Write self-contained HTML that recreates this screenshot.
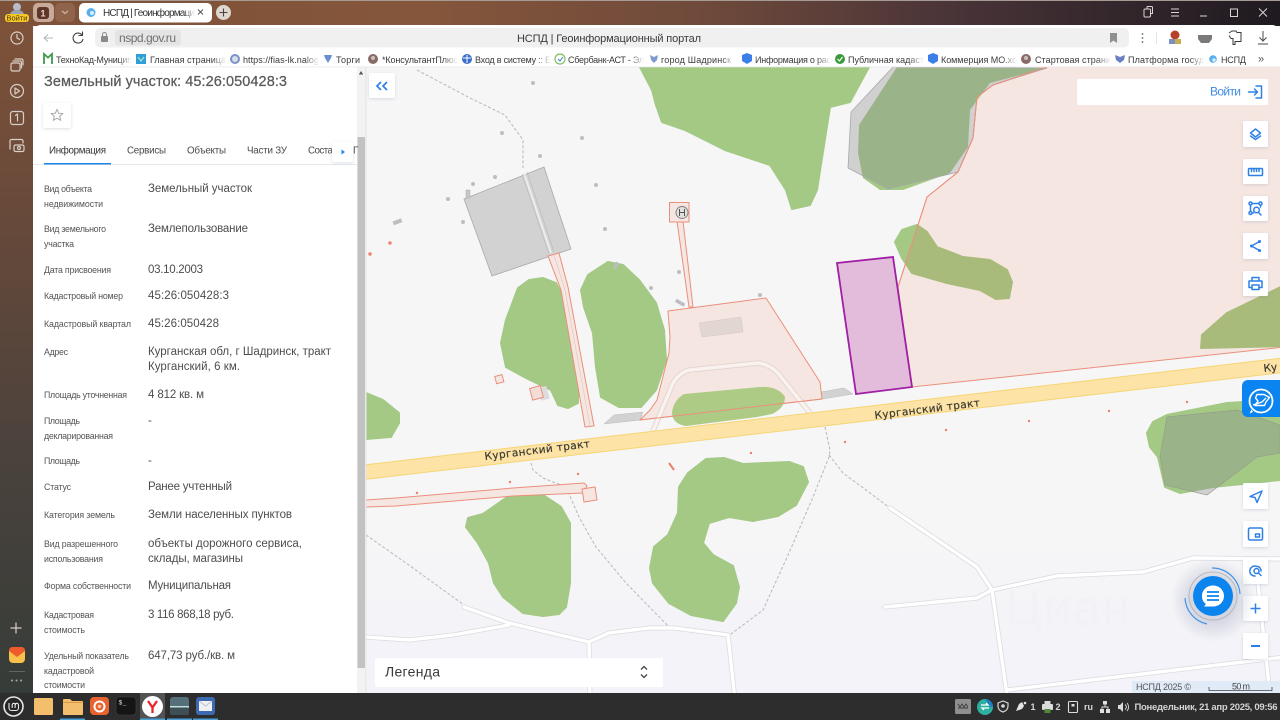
<!DOCTYPE html>
<html lang="ru"><head><meta charset="utf-8"><title>НСПД | Геоинформационный портал</title>
<style>
html,body{margin:0;padding:0;width:1280px;height:720px;overflow:hidden;background:#f6f6f7}
svg{display:block;position:absolute;left:0;top:0}
text{font-family:"Liberation Sans","Noto Sans CJK JP",sans-serif}
.l{font-size:8.8px;fill:#555}
.v{font-size:11.5px;fill:#4d4d4d}
.b{font-size:9px;fill:#3a3a3a}
.t{font-size:9.8px;fill:#4a4a4a}
.r{font-family:"DejaVu Sans",sans-serif;font-size:10.5px;fill:#3a3a30;stroke:#3a3a30;stroke-width:.2}
.ic{fill:none;stroke:#2f80e6;stroke-width:1.5;stroke-linecap:round;stroke-linejoin:round}
.si{fill:none;stroke:#d9cfc8;stroke-width:1.2;stroke-linecap:round;stroke-linejoin:round}
.rd1{fill:none;stroke:#dcdce0;stroke-width:5;stroke-linecap:round;stroke-linejoin:round}
.rd2{fill:none;stroke:#fff;stroke-width:3.4;stroke-linecap:round;stroke-linejoin:round}
.ds{fill:none;stroke:#bcbcc0;stroke-width:1.1;stroke-dasharray:3 2}
.pk{fill:#f6e6e1;stroke:#ea8f7c;stroke-width:1}
</style></head><body>
<svg width="1280" height="720" viewBox="0 0 1280 720" xmlns="http://www.w3.org/2000/svg">
<defs>
<linearGradient id="top" x1="0" x2="1" y1="0" y2="0"><stop offset="0" stop-color="#7c5138"/><stop offset=".33" stop-color="#85563b"/><stop offset=".55" stop-color="#6f4a3b"/><stop offset=".75" stop-color="#483337"/><stop offset="1" stop-color="#1e1a20"/></linearGradient>
<linearGradient id="side" x1="0" x2="0" y1="0" y2="1"><stop offset="0" stop-color="#7e5239"/><stop offset=".3" stop-color="#66493a"/><stop offset=".65" stop-color="#4a423c"/><stop offset="1" stop-color="#363c39"/></linearGradient>
<linearGradient id="low" x1="0" x2="0" y1="0" y2="1"><stop offset="0" stop-color="#f6f6f7"/><stop offset="1" stop-color="#f3f3f9"/></linearGradient>
<linearGradient id="fade" x1="0" x2="1" y1="0" y2="0"><stop offset="0" stop-color="#fff" stop-opacity="0"/><stop offset="1" stop-color="#fff"/></linearGradient>
<radialGradient id="sh"><stop offset=".5" stop-color="#8088a8" stop-opacity=".28"/><stop offset="1" stop-color="#8088a8" stop-opacity="0"/></radialGradient>
<filter id="bs" x="-30%" y="-30%" width="160%" height="160%"><feDropShadow dx="0" dy="1" stdDeviation="1.5" flood-color="#6a7a90" flood-opacity=".25"/></filter>
<clipPath id="pc"><polygon points="1047,67 993,85 977,97 973,138 958,172 927,197 898,287 912,387 1280,348 1280,67"/></clipPath>
</defs>

<!-- MAP -->
<rect x="366" y="67" width="914" height="626" fill="#f6f6f7"/>
<rect x="366" y="520" width="914" height="173" fill="url(#low)"/>
<rect x="366" y="640" width="914" height="53" fill="#f3f3f9"/>
<text x="1005" y="625" font-size="50" fill="#f1f1f6" textLength="125">Циан</text>

<!-- dashed paths -->
<path class="ds" d="M417,70 470,98 505,115 523,140 523,168"/>
<path class="ds" d="M531,463 533,470 543,478 566,487 579,517 596,547 626,583 669,627"/>
<path class="ds" d="M825,427 830,450 829,457 813,497 789,553 763,610 731,634"/>
<path class="ds" d="M366,535 406,563 464,605"/>
<path class="ds" d="M829,455 843,473 866,490 890,508"/>

<!-- lower roads -->
<g>
<path class="rd1" d="M464,607 509,623 589,642 590,700"/><path class="rd1" d="M366,637 409,640 453,635 509,625"/><path class="rd1" d="M589,642 609,633 649,628 674,628 728,635 735,700"/>
<path class="rd1" d="M890,508 977,567 992,590 1007,695"/><path class="rd1" d="M885,607 977,598 992,590 1057,576 1143,572 1193,558 1285,559"/><path class="rd1" d="M1258,583 1270,695"/><path class="rd1" d="M1007,690 1285,657"/>
<path class="rd2" d="M464,607 509,623 589,642 590,700"/><path class="rd2" d="M366,637 409,640 453,635 509,625"/><path class="rd2" d="M589,642 609,633 649,628 674,628 728,635 735,700"/>
<path class="rd2" d="M890,508 977,567 992,590 1007,695"/><path class="rd2" d="M885,607 977,598 992,590 1057,576 1143,572 1193,558 1285,559"/><path class="rd2" d="M1258,583 1270,695"/><path class="rd2" d="M1007,690 1285,657"/>
</g>

<!-- greens -->
<g fill="#a3c985" stroke="#a3c985" stroke-width="2" stroke-linejoin="round">
<polygon points="640,67 652,90 656,105 662,122 685,130 725,150 770,165 786,190 792,209 810,205 817,190 830,107 850,102 869,67"/>
<polygon points="518,288 529,280 543,278 556,283 561,293 566,320 571,350 578,377 578,403 568,408 558,405 551,390 526,378 506,367 501,343 506,320"/>
<polygon points="581,290 588,275 608,262 623,265 639,280 656,303 664,330 666,360 656,390 641,407 619,407 601,397 596,367 593,333 584,307"/>
<polygon points="366,393 383,400 399,413 399,423 391,437 366,439"/>
<polygon points="468,518 483,514 513,493 523,489 543,495 561,507 570,523 570,583 566,607 559,614 543,616 523,613 503,597 494,583 489,563 478,543 466,527"/>
<polygon points="706,459 724,458 743,464 789,462 803,467 808,482 796,505 778,516 753,521 729,517 709,523 703,543 713,555 733,566 739,587 736,603 723,621 691,615 669,603 653,583 650,568 654,547 668,535 678,513 679,487 688,473"/>
<polygon points="895,242 902,230 917,225 927,232 937,247 963,257 990,260 1007,270 1012,282 1009,298 996,299 980,290 947,283 912,273 902,258"/>
<polygon points="1147,433 1153,422 1167,415 1227,403 1280,400 1280,480 1213,487 1180,493 1165,487 1158,457 1150,447"/>
</g>

<!-- big pink zone -->
<polygon class="pk" points="1047,67 993,85 977,97 973,138 958,172 927,197 898,287 912,387 1285,347 1285,60 1047,60"/>
<g clip-path="url(#pc)" fill="#a9bb7b" stroke="#a9bb7b" stroke-width="2" stroke-linejoin="round">
<polygon points="895,242 902,230 917,225 927,232 937,247 963,257 990,260 1007,270 1012,282 1009,298 996,299 980,290 947,283 912,273 902,258"/>
<polygon points="1201,348 1202,335 1227,313 1285,285 1285,346"/>
</g>

<!-- top forest + gray -->
<polygon fill="#a3c985" points="897,67 859,125 858,153 863,178 880,190 903,190 950,173 968,147 970,110 990,83 1047,68"/>
<polygon fill="#8e8e8e" fill-opacity=".36" stroke="#a8a8a8" stroke-width=".8" points="893,67 851,112 848,168 888,189 958,172 973,138 977,97 993,85 1047,68"/>
<polyline fill="none" stroke="#ea8f7c" points="1047,67 993,85 977,97 973,138 958,172 927,197 898,287"/>

<!-- right lower gray -->
<polygon fill="#8e8e8e" fill-opacity=".36" stroke="#969c8e" stroke-width=".7" points="1167,417 1237,410 1280,425 1280,453 1257,457 1207,495 1165,485 1160,457"/>

<!-- building -->
<polygon points="464,199 544,167 571,249 492,276" fill="#d2d2d3" stroke="#a9a9ab" stroke-width=".8"/>
<path d="M524,173 551,253" stroke="#ececec" stroke-width="2" fill="none"/>
<path d="M522,174 549,254M527,172 554,252" stroke="#b8b8b8" stroke-width=".6" fill="none"/>
<rect x="466" y="190" width="4" height="8" fill="#c8c8c8" stroke="#aaa" stroke-width=".5"/>

<!-- pink road to building -->
<polygon class="pk" points="548,256 559,253 568,287 594,426 585,427 561,290"/>
<path d="M554,255 565,290 590,426" stroke="#e2c9c2" stroke-width=".7" fill="none"/>

<!-- gray strips -->
<polygon points="821,392 844,388 853,394 822,399" fill="#d2d2d3" stroke="#b8b8b8" stroke-width=".5"/>
<polygon points="604,424 614,415 643,412 640,420" fill="#d2d2d3" stroke="#b8b8b8" stroke-width=".5"/>

<!-- central pink -->
<polygon class="pk" points="668,311 766,298 820,382 822,399 640,420 650,410 657,400 669,353 670,337"/>
<polygon points="699,323 741,317 743,332 702,337" fill="#e2d6d2" stroke="#d4c8c4" stroke-width=".5"/>
<path d="M653,431 673,383 Q680,372 690,370 L758,363 Q768,364 777,372 L810,413" fill="none" stroke="#e4d6d1" stroke-width="5.500"/>
<path d="M653,431 673,383 Q680,372 690,370 L758,363 Q768,364 777,372 L810,413" fill="none" stroke="#faf2ee" stroke-width="3.500"/>
<path fill="#aecb85" d="M672,412 Q674,400 684,394 L760,387 Q778,386 785,397 Q785,408 772,414 L757,417 L686,426 Q672,424 672,412Z"/>
<polyline fill="none" stroke="#ea8f7c" points="640,420 822,399"/>

<!-- purple selected -->
<polygon points="837,263 893,257 912,387 856,394" fill="#e4bcdb" stroke="#a01fa4" stroke-width="1.800"/>

<!-- hotel -->
<polygon class="pk" points="677,221 683,221 693,307 689,307"/>
<rect x="669.500" y="202.500" width="19.500" height="19.500" class="pk"/>
<circle cx="682" cy="212.500" r="6" fill="#e2e0de" stroke="#7a7a7a" stroke-width=".9"/>
<path d="M679.500,209v7M684.500,209v7M679.500,212.500h5" stroke="#555" stroke-width="1" fill="none"/>

<!-- small pink bits -->
<rect x="495.500" y="375.500" width="7.500" height="7.500" transform="rotate(-15 499 379)" fill="#f6e6e1" stroke="#ea8f7c"/>
<rect x="539" y="387" width="9" height="13" transform="rotate(-15 543 393)" fill="#dcdcdc"/>
<rect x="531" y="387" width="11" height="12" transform="rotate(-15 536 393)" fill="#f3ddd6" stroke="#ea8f7c"/>
<path d="M366,500 396,498 513,488 584,483 587,486 583,493 513,496 396,506 366,507Z" class="pk"/>
<polygon class="pk" points="582,489 595,487 597,500 584,502"/>
<path d="M669,463 674,470" stroke="#e9806a" stroke-width="2"/>

<!-- yellow road -->
<path d="M360,472.700 1285,365" stroke="#f5d576" stroke-width="15.500" fill="none"/>
<path d="M360,472.700 1285,365" stroke="#fde3a6" stroke-width="13.500" fill="none"/>
<text class="r" transform="translate(485,460) rotate(-7)" textLength="106">Курганский тракт</text>
<text class="r" transform="translate(875,419) rotate(-7)" textLength="106">Курганский тракт</text>
<text class="r" transform="translate(1264,372) rotate(-7)">Ку</text>

<!-- dots -->
<g fill="#bdbdc2">
<circle cx="448" cy="199" r="2"/><circle cx="473" cy="184" r="2"/><circle cx="495" cy="177" r="2"/><circle cx="463" cy="222" r="2"/><circle cx="596" cy="185" r="2"/><circle cx="605" cy="229" r="2"/><circle cx="651" cy="288" r="2"/><circle cx="679" cy="272" r="2"/><circle cx="760" cy="295" r="2"/><circle cx="533" cy="83" r="2"/><circle cx="502" cy="133" r="2"/><circle cx="540" cy="156" r="2"/><circle cx="582" cy="138" r="2"/>
<rect x="393" y="220" width="9" height="4" transform="rotate(-20 397 222)"/>
<rect x="613" y="264" width="7" height="3.500" transform="rotate(-60 616 266)"/>
<rect x="675" y="301" width="10" height="3.500" transform="rotate(30 680 303)"/>
</g>
<g fill="#ec8068">
<circle cx="370" cy="254" r="1.700"/><circle cx="390" cy="243" r="1.700"/><circle cx="417" cy="493" r="1.200"/><circle cx="510" cy="482" r="1.200"/><circle cx="578" cy="474" r="1.200"/><circle cx="751" cy="453" r="1.200"/><circle cx="845" cy="442" r="1.200"/><circle cx="946" cy="430" r="1.200"/><circle cx="1029" cy="421" r="1.200"/><circle cx="1109" cy="411" r="1.200"/><circle cx="1187" cy="402" r="1.200"/>
</g>

<!-- attribution -->
<rect x="1132" y="681" width="148" height="12" fill="#dfeaf7" fill-opacity=".9"/>
<text x="1136" y="690" font-size="9" fill="#555" textLength="55">НСПД 2025 ©</text>
<text x="1232" y="689.500" font-size="9" fill="#444" textLength="18">50 m</text>
<path d="M1209,687v3.500h63v-3.500" stroke="#444" stroke-width=".8" fill="none"/>

<!-- Legend -->
<rect x="375" y="658" width="288" height="29" rx="2" fill="#fff"/>
<text x="385" y="676.500" font-size="14" fill="#3a3a3a" textLength="55">Легенда</text>
<path d="M641,669.500 644,666.500 647,669.500M641,674.500 644,677.500 647,674.500" stroke="#444" stroke-width="1.300" fill="none"/>

<!-- collapse -->
<rect x="369" y="73" width="26" height="25" rx="2" fill="#fff" filter="url(#bs)"/>
<path d="M381,82 377,86 381,90M387,82 383,86 387,90" fill="none" stroke="#2f80e6" stroke-width="1.700"/>

<!-- login -->
<rect x="1077" y="79" width="191" height="26" rx="1.500" fill="#fff"/>
<text x="1210" y="95.500" font-size="12" fill="#3f8ae2" textLength="31">Войти</text>
<path class="ic" stroke-width="1.700" d="M1248.500,92h9M1254.500,89l3,3-3,3M1256,86h5.500v12h-5.500"/>

<!-- right buttons -->
<g filter="url(#bs)" fill="#fff">
<rect x="1243" y="121" width="25" height="26" rx="1.500"/><rect x="1243" y="159" width="25" height="25" rx="1.500"/><rect x="1243" y="196" width="25" height="25" rx="1.500"/><rect x="1243" y="233" width="25" height="26" rx="1.500"/><rect x="1243" y="271" width="25" height="25" rx="1.500"/>
<rect x="1243" y="483" width="25" height="26" rx="1.500"/><rect x="1243" y="521" width="25" height="26" rx="1.500"/><rect x="1243" y="558" width="25" height="26" rx="1.500"/><rect x="1243" y="596" width="25" height="25" rx="1.500"/><rect x="1243" y="633" width="25" height="26" rx="1.500"/>
</g>
<path class="ic" stroke-width="1.200" d="M1255.500,129 1260.500,133 1255.500,137 1250.500,133ZM1250.500,136 1255.500,139.500 1260.500,136"/>
<rect class="ic" x="1248.500" y="168.500" width="14" height="7" rx="1"/><path class="ic" stroke-width="1" d="M1251.500,169v2.500M1254,169v2.500M1256.500,169v2.500M1259,169v2.500"/>
<g class="ic" stroke-width="1"><circle cx="1250.500" cy="203.500" r="1.500"/><circle cx="1260.500" cy="203.500" r="1.500"/><circle cx="1250.500" cy="213" r="1.500"/><circle cx="1256.500" cy="210" r="2.800"/><path d="M1252.500,203.500h6M1250.500,205.500v6M1252.500,213h1M1260.500,205.500v1.500M1258.500,212.500l2.500,2.500"/></g>
<g class="ic" stroke-width="1.200"><path d="M1259.500,241.500 1251.500,246 1259.500,250.500"/><circle cx="1251.500" cy="246" r=".8" fill="#2f80e6"/><circle cx="1259.500" cy="241.500" r=".8" fill="#2f80e6"/><circle cx="1259.500" cy="250.500" r=".8" fill="#2f80e6"/></g>
<g class="ic" stroke-width="1.700"><path d="M1252,281v-3.500h7v3.500M1252,287.500h-3v-6.500h13v6.500h-3"/><rect x="1252" y="285" width="7" height="4.500"/></g>
<path class="ic" d="M1262,491 1250,496.500 1255,497.500 1257,502.500Z"/>
<rect class="ic" x="1248.500" y="528" width="14" height="12" rx="1.500"/><rect class="ic" x="1255.500" y="534" width="4" height="3" stroke-width="1.100"/>
<g class="ic" stroke-width="1.100"><circle cx="1256.500" cy="571" r="2.500"/><path d="M1257,566.500a5,5 0 1 0 -2,9.500M1261,571a4.500,4.500 0 0 0 -3,-4.500M1258.500,573l2.500,2.500"/></g>
<path d="M1250.500,608.500h10M1255.500,603.500v10" stroke="#2f80e6" stroke-width="1.500" fill="none"/>
<path d="M1251,646h9" stroke="#2f80e6" stroke-width="2" fill="none"/>

<!-- side tab -->
<path d="M1248,380H1280V417H1248a6,6 0 0 1 -6,-6V386a6,6 0 0 1 6,-6Z" fill="#0a84f0"/>
<circle cx="1261" cy="401" r="11.500" fill="none" stroke="#fff" stroke-width="1.800"/>
<path d="M1257,394.500h7l5.500,3-3.500,4.500-1.500,3.500h-9.500l3,-4.500-2.500,-3z" fill="#0a84f0" stroke="#fff" stroke-width="1.400" stroke-linejoin="round"/>
<path d="M1253,405 1262,402 1266,398" fill="none" stroke="#fff" stroke-width="1.300"/>
<path d="M1253,412l-3.500,1.500 2,-4z" fill="#fff"/>

<!-- chat -->
<circle cx="1213" cy="600" r="42" fill="url(#sh)"/>
<circle cx="1213" cy="596" r="24" fill="none" stroke="#b9b9bd" stroke-width="1.100"/>
<path d="M1212,568a28,28 0 0 1 28,26" fill="none" stroke="#3e93e6" stroke-width="1.200"/>
<path d="M1185,598a28,28 0 0 0 22,26" fill="none" stroke="#3e93e6" stroke-width="1.200"/>
<circle cx="1213" cy="596" r="20" fill="#0b84ee"/>
<path d="M1213,585.500c6.200,0 11,4.600 11,10.500s-4.800,10.500-11,10.500h-9l2,-2.500c-2.900,-1.900-4,-4.700-4,-8c0,-5.900 4.800,-10.500 11,-10.500Z" fill="#fff"/>
<path d="M1207,592h12M1207,596h12M1207,600h12" stroke="#0b84ee" stroke-width="1.800" fill="none"/>

<!-- LEFT PANEL -->
<rect x="33" y="67" width="324" height="626" fill="#fff"/>
<rect x="357" y="67" width="8.500" height="626" fill="#f2f2f2"/>
<rect x="357.500" y="137" width="7.500" height="531" fill="#c2c2c2"/>
<path d="M361,71 358.800,74.500H363.200Z" fill="#555"/>
<rect x="365.500" y="67" width="1" height="626" fill="#e3e3e6"/>
<text x="44" y="86" font-size="14.500" fill="#5a5a5a" stroke="#5a5a5a" stroke-width=".25" textLength="243">Земельный участок: 45:26:050428:3</text>
<rect x="43" y="103" width="28" height="25" rx="2" fill="#fff" filter="url(#bs)"/>
<path d="M57,109.500 58.700,113.200 62.700,113.600 59.700,116.300 60.600,120.300 57,118.200 53.400,120.300 54.300,116.300 51.300,113.600 55.300,113.200Z" fill="none" stroke="#a8a8a8" stroke-width="1"/>

<text x="49" y="153.500" class="t" style="fill:#333" textLength="57">Информация</text>
<text x="127" y="153.500" class="t" textLength="39">Сервисы</text>
<text x="187" y="153.500" class="t" textLength="39">Объекты</text>
<text x="247" y="153.500" class="t" textLength="40">Части ЗУ</text>
<text x="308" y="153.500" class="t" textLength="25">Соста</text>
<text x="353" y="153.500" class="t">Г</text>
<rect x="33" y="164" width="324" height="1" fill="#e6e8ec"/>
<rect x="44" y="163" width="67" height="1.500" fill="#1f86e6"/>
<rect x="332" y="142" width="21" height="20" rx="2" fill="#fff" filter="url(#bs)"/>
<path d="M341.500,149.500 345,152 341.500,154.500Z" fill="#1f86e6"/>

<g>
<text class="l" x="44" y="192" textLength="48">Вид объекта</text>
<text class="l" x="44" y="207" textLength="59">недвижимости</text>
<text class="l" x="44" y="232" textLength="62">Вид земельного</text>
<text class="l" x="44" y="247" textLength="30">участка</text>
<text class="l" x="44" y="273" textLength="67">Дата присвоения</text>
<text class="l" x="44" y="299" textLength="79">Кадастровый номер</text>
<text class="l" x="44" y="327" textLength="87">Кадастровый квартал</text>
<text class="l" x="44" y="355" textLength="24">Адрес</text>
<text class="l" x="44" y="398" textLength="83">Площадь уточненная</text>
<text class="l" x="44" y="424" textLength="36">Площадь</text>
<text class="l" x="44" y="439" textLength="69">декларированная</text>
<text class="l" x="44" y="464" textLength="36">Площадь</text>
<text class="l" x="44" y="490" textLength="27">Статус</text>
<text class="l" x="44" y="518" textLength="71">Категория земель</text>
<text class="l" x="44" y="547" textLength="74">Вид разрешенного</text>
<text class="l" x="44" y="562" textLength="59">использования</text>
<text class="l" x="44" y="589" textLength="87">Форма собственности</text>
<text class="l" x="44" y="618" textLength="50">Кадастровая</text>
<text class="l" x="44" y="633" textLength="41">стоимость</text>
<text class="l" x="44" y="659" textLength="85">Удельный показатель</text>
<text class="l" x="44" y="674" textLength="50">кадастровой</text>
<text class="l" x="44" y="688" textLength="41">стоимости</text>
</g>
<g>
<text class="v" x="148" y="192" textLength="104">Земельный участок</text>
<text class="v" x="148" y="232" textLength="100">Землепользование</text>
<text class="v" x="148" y="273" textLength="55">03.10.2003</text>
<text class="v" x="148" y="299" textLength="81">45:26:050428:3</text>
<text class="v" x="148" y="327" textLength="71">45:26:050428</text>
<text class="v" x="148" y="355" textLength="183">Курганская обл, г Шадринск, тракт</text>
<text class="v" x="148" y="370" textLength="92">Курганский, 6 км.</text>
<text class="v" x="148" y="398" textLength="56">4 812 кв. м</text>
<text class="v" x="148" y="424">-</text>
<text class="v" x="148" y="464">-</text>
<text class="v" x="148" y="490" textLength="84">Ранее учтенный</text>
<text class="v" x="148" y="518" textLength="144">Земли населенных пунктов</text>
<text class="v" x="148" y="547" textLength="154">объекты дорожного сервиса,</text>
<text class="v" x="148" y="562" textLength="95">склады, магазины</text>
<text class="v" x="148" y="589" textLength="83">Муниципальная</text>
<text class="v" x="148" y="618" textLength="86">3 116 868,18 руб.</text>
<text class="v" x="148" y="659" textLength="87">647,73 руб./кв. м</text>
</g>

<!-- WINDOW CHROME -->
<rect width="1280" height="26" fill="url(#top)"/>
<rect width="1280" height="1" fill="#a59a94"/>
<rect x="0" y="25" width="33" height="668" fill="url(#side)"/>
<path d="M33,67V33a8,8 0 0 1 8,-8H1272a8,8 0 0 1 8,8V67Z" fill="#fff"/>

<!-- user -->
<circle cx="17" cy="7" r="4" fill="#b6bcc8"/><path d="M10,14c1,-3 4,-4 7,-4s6,1 7,4z" fill="#9aa2b0"/>
<rect x="5" y="14" width="24" height="8" rx="3" fill="#f6c926"/>
<text x="17" y="20.500" font-size="7.500" fill="#4a3a10" text-anchor="middle">Войти</text>

<rect x="33" y="3" width="21" height="19" rx="5" fill="#c7aa9a"/>
<rect x="37" y="7" width="12" height="12" rx="3" fill="#5f3429"/>
<text x="43" y="16.500" font-size="9" font-weight="700" fill="#e8d8d0" text-anchor="middle">1</text>
<rect x="55" y="3" width="20" height="19" rx="5" fill="#8f644b"/>
<path d="M62,11l3,2.500 3,-2.500" stroke="#cdb6a8" stroke-width="1.200" fill="none"/>
<rect x="79" y="3" width="133" height="19.500" rx="5" fill="#fff"/>
<circle cx="91" cy="12.500" r="4.500" fill="#58b0ee"/><circle cx="92" cy="13" r="2" fill="#d8eefa"/>
<text x="103" y="16" font-size="10" fill="#333" textLength="92">НСПД | Геоинформаци</text>
<rect x="183" y="4" width="12" height="17" fill="url(#fade)"/>
<path d="M198,9.500l5,5M203,9.500l-5,5" stroke="#555" stroke-width="1" fill="none"/>
<circle cx="223.500" cy="12.500" r="7.500" fill="#e0d6d0"/><path d="M219.500,12.500h8M223.500,8.500v8" stroke="#444" stroke-width="1.100"/>

<!-- window controls -->
<g fill="none" stroke="#d8d4d2" stroke-width="1">
<rect x="1144" y="9" width="6.500" height="8" rx="1"/><path d="M1147,6.500h4.500a1,1 0 0 1 1,1v6h-2M1147,6.500v2.500"/>
<path d="M1171,9h8M1171,12.500h8M1171,16h8"/>
<path d="M1200,16h7"/>
<rect x="1230.500" y="9" width="7" height="7.500"/>
<path d="M1259,8.500l8,8M1267,8.500l-8,8"/>
</g>

<!-- toolbar -->
<rect x="95" y="28" width="1034" height="19.500" rx="5" fill="#f0f0f0"/>
<rect x="115" y="30" width="66" height="15.500" rx="3" fill="#e4e4e4"/>
<text x="119" y="42" font-size="12" fill="#707070" textLength="57">nspd.gov.ru</text>
<rect x="101" y="36" width="7" height="6" rx="1" fill="#8a8a8a"/><path d="M102.500,36v-1.500a2,2 0 0 1 4,0V36" fill="none" stroke="#8a8a8a"/>
<text x="517" y="42" font-size="11" fill="#3a3a3a" textLength="184">НСПД | Геоинформационный портал</text>
<path d="M1110,33h7v10l-3.500,-2.500 -3.500,2.500Z" fill="#8f8f8f"/>
<path d="M44,38h9M44,38l4,-3.500M44,38l4,3.500" stroke="#b5b5b5" stroke-width="1.100" fill="none"/>
<path d="M82,35a5,5 0 1 0 1,4M82.500,31.500V35.500H78.500" stroke="#444" stroke-width="1.100" fill="none"/>
<g fill="#666"><circle cx="1142.500" cy="34" r=".9"/><circle cx="1142.500" cy="38" r=".9"/><circle cx="1142.500" cy="42" r=".9"/></g>
<rect x="1156" y="32" width="1" height="12" fill="#e4e4e4"/>
<circle cx="1175" cy="35" r="4.500" fill="#b8402a"/><rect x="1169" y="39" width="6" height="5" fill="#7c8fc0"/><rect x="1175" y="39" width="6" height="5" fill="#c4b050"/>
<path d="M1198,35h14v4l-3,4h-8l-3,-4Z" fill="#7a7a7a"/>
<path d="M1229,33l3,-2h4l1,1.500h4v9h-6v3h-2v-6h-2l-2,-3" fill="none" stroke="#3a3a3a" stroke-width="1"/>
<path d="M1263,31v10M1259.500,37.500l3.500,3.500 3.500,-3.500M1258,44h10" fill="none" stroke="#4a4a4a" stroke-width="1"/>

<!-- bookmarks -->
<rect x="33" y="66.500" width="1247" height=".8" fill="#e8e8e8"/>
<g>
<text class="b" x="56" y="63" textLength="76">ТехноКад-Муницип</text>
<text class="b" x="150" y="63" textLength="76">Главная страница</text>
<text class="b" x="243" y="63" textLength="76">https://fias-lk.nalog</text>
<text class="b" x="336" y="63" textLength="24">Торги</text>
<text class="b" x="382" y="63" textLength="76">*КонсультантПлюс</text>
<text class="b" x="475" y="63" textLength="76">Вход в систему :: Е</text>
<text class="b" x="568" y="63" textLength="76">Сбербанк-АСТ - Эл</text>
<text class="b" x="661" y="63" textLength="70">город Шадринск</text>
<text class="b" x="755" y="63" textLength="76">Информация о рас</text>
<text class="b" x="848" y="63" textLength="76">Публичная кадаст</text>
<text class="b" x="941" y="63" textLength="76">Коммерция МО.хо</text>
<text class="b" x="1035" y="63" textLength="76">Стартовая страни</text>
<text class="b" x="1128" y="63" textLength="76">Платформа госуд</text>
<text class="b" x="1221" y="63" textLength="25">НСПД</text>
</g>
<g fill="url(#fade)">
<rect x="118" y="51" width="14" height="15"/><rect x="212" y="51" width="14" height="15"/><rect x="305" y="51" width="14" height="15"/><rect x="442" y="51" width="16" height="15"/><rect x="536" y="51" width="15" height="15"/><rect x="630" y="51" width="14" height="15"/><rect x="722" y="51" width="12" height="15"/><rect x="816" y="51" width="15" height="15"/><rect x="908" y="51" width="16" height="15"/><rect x="1002" y="51" width="15" height="15"/><rect x="1096" y="51" width="15" height="15"/><rect x="1190" y="51" width="14" height="15"/>
</g>
<!-- bookmark icons -->
<path d="M44,64V54l4,3.500 4,-3.500v10" fill="none" stroke="#3e9a4c" stroke-width="1.800"/>
<rect x="136" y="54" width="10" height="10" fill="#2f9fd8"/><path d="M138,57l3,4 3,-4" stroke="#a8e0c8" stroke-width="1.300" fill="none"/>
<circle cx="235" cy="59" r="5" fill="#7b93c8"/><circle cx="235" cy="59" r="3" fill="#d8dde8"/>
<path d="M324,55h8l-1,3 -3,5 -3,-5Z" fill="#6a8fd0"/>
<circle cx="373" cy="59" r="5" fill="#8a6a68"/><circle cx="373" cy="58" r="2" fill="#c8c0bc"/>
<circle cx="467" cy="59" r="5" fill="#3a6fc8"/><path d="M463,58h8M467,55v8" stroke="#fff"/>
<circle cx="560" cy="59" r="5" fill="#fff" stroke="#7fbf60" stroke-width="1.200"/><path d="M558,59l2,2 3,-4" stroke="#3a80c0" fill="none"/>
<path d="M650,55l4,2 4,-2 -1,5 -3,3 -3,-3Z" fill="#7f9ad0"/>
<path d="M742,55l5,-2 5,2v6l-5,3 -5,-3Z" fill="#3d7fe8"/>
<circle cx="840" cy="59" r="5" fill="#3a9a3c"/><path d="M837.500,59l2,2 3,-4" stroke="#fff" stroke-width="1.200" fill="none"/>
<path d="M928,55l5,-2 5,2v6l-5,3 -5,-3Z" fill="#3d7fe8"/>
<circle cx="1026" cy="59" r="5" fill="#8a6a68"/><circle cx="1026" cy="58" r="2" fill="#c8c0bc"/>
<path d="M1115,55l5,2 5,-2 -1,5 -4,3 -4,-3Z" fill="#6a80c0"/>
<circle cx="1213" cy="59" r="3.800" fill="#55aeee"/><circle cx="1214" cy="60" r="1.700" fill="#d8eefa"/>
<text x="1258" y="62.500" font-size="11" fill="#555">»</text>

<!-- sidebar icons -->
<g class="si">
<circle cx="17" cy="38" r="6"/><path d="M17,34.500V38l2.500,1.500"/>
<rect x="11" y="63" width="9" height="8" rx="1.500"/><path d="M13,61h7a1.500,1.500 0 0 1 1.500,1.500V68M15,59h6.500a1.500,1.500 0 0 1 1.500,1.500V65"/>
<circle cx="17" cy="91" r="6.500"/><path d="M15,88l4.500,3 -4.500,3Z"/>
<rect x="10.500" y="111.500" width="13" height="13" rx="2.500"/><path d="M15.500,115.500l2,-1.500v7"/>
<path d="M10,149v-8a1.500,1.500 0 0 1 1.500,-1.500h10a1.500,1.500 0 0 1 1.500,1.500v2"/><rect x="14" y="145" width="10" height="6.500" rx="1.500"/><circle cx="19" cy="148" r="1.500"/>
<path d="M11,628h10M16,623v10"/>
</g>
<rect x="9" y="647" width="16" height="16" rx="4" fill="#f7c14a"/><path d="M9,651a4,4 0 0 1 4,-4h8a4,4 0 0 1 4,4l-8,6Z" fill="#ee5a2a"/>
<rect x="9" y="671" width="16" height=".8" fill="#6a6e6c"/>
<g fill="#a8aaa8"><circle cx="12" cy="680.500" r="1"/><circle cx="16.500" cy="680.500" r="1"/><circle cx="21" cy="680.500" r="1"/></g>

<!-- TASKBAR -->
<rect x="0" y="693" width="1280" height="27" fill="#2d2d2e"/>
<rect x="140" y="693" width="25" height="27" fill="#525252"/>
<circle cx="13.500" cy="706.500" r="9.500" fill="#262626" stroke="#e8e8e8" stroke-width="1.600"/>
<path d="M9,703v5a2.500,2.500 0 0 0 2.500,2.500h4.500a2.500,2.500 0 0 0 2.500,-2.500v-3a1.700,1.700 0 0 0 -3.400,0v3M12.200,708v-3a1.700,1.700 0 0 1 3.400,0" fill="none" stroke="#e8e8e8" stroke-width="1.100"/>
<rect x="34" y="698" width="19" height="17" rx="1.500" fill="#f4bf6d"/>
<path d="M63,700a1,1 0 0 1 1,-1h6l2,2h10a1,1 0 0 1 1,1v12a1,1 0 0 1 -1,1h-18a1,1 0 0 1 -1,-1Z" fill="#f4bf6d"/><rect x="63" y="702" width="19" height="1" fill="#d49a45"/>
<rect x="60" y="718.500" width="25" height="1.500" fill="#4aa0d8"/>
<rect x="90" y="697" width="19" height="18" rx="4" fill="#e8622f"/>
<circle cx="99.500" cy="706.500" r="5" fill="none" stroke="#fff" stroke-width="2"/><circle cx="99.500" cy="706.500" r="1.700" fill="#f3c8a0"/>
<rect x="116" y="697" width="20" height="18" rx="3" fill="#151515" stroke="#444" stroke-width=".6"/>
<text x="118.500" y="704.500" font-size="6.500" fill="#ddd" style="font-family:'Liberation Mono',monospace">$_</text>
<circle cx="152.500" cy="706.500" r="10.500" fill="#fff"/>
<path d="M148,701l4.500,6.500 4.500,-6.500M152.500,707.500V713" stroke="#e8242a" stroke-width="2.300" fill="none"/>
<rect x="140" y="718.500" width="25" height="1.500" fill="#4aa0d8"/>
<rect x="170" y="697" width="19" height="18" rx="3" fill="#55707a"/><rect x="170" y="707.500" width="19" height="7.500" rx="2" fill="#3e4f55"/><rect x="170" y="706" width="19" height="1.500" fill="#bfe0dc"/>
<rect x="167" y="718.500" width="25" height="1.500" fill="#4aa0d8"/>
<rect x="196" y="697" width="19" height="18" rx="3" fill="#3c6ab0"/><rect x="199" y="701" width="13" height="10" fill="#eef0f4"/><path d="M199,701l6.500,5 6.500,-5" stroke="#b8c0cc" fill="none"/>
<rect x="193" y="718.500" width="25" height="1.500" fill="#4aa0d8"/>

<!-- tray -->
<rect x="955" y="699" width="16" height="15" rx="1.500" fill="#8f8f8f"/><path d="M958,704l2,3 2,-3 2,3 2,-3 2,3M958,708l10,0" stroke="#3a3a3a" fill="none" stroke-width=".9"/>
<circle cx="985" cy="707" r="8" fill="#2db0a0"/><path d="M985,699a8,8 0 0 1 8,8h-3z" fill="#1e7ec8"/><path d="M981,705h7l-2,-2M989,708h-7l2,2" stroke="#fff" stroke-width="1.300" fill="none"/>
<path d="M998,703l5,-2 5,2v3c0,3-2,5-5,6-3,-1-5,-3-5,-6Z" fill="none" stroke="#d8d8d8" stroke-width="1.200"/><circle cx="1003" cy="706" r="1.800" fill="#d8d8d8"/>
<path d="M1016,711l3,-7 3,-2 2,4 -2,3Z" fill="#e2e2e2"/><circle cx="1025" cy="703" r="1.300" fill="#e2e2e2"/>
<text x="1030.500" y="710" font-size="9" font-weight="700" fill="#d8d8d8">1</text>
<rect x="1042" y="704" width="11" height="6" rx="1" fill="#dcdcdc"/><rect x="1044.500" y="701" width="6" height="3" fill="#dcdcdc"/><rect x="1044.500" y="709" width="6" height="4" fill="#4f8a3a"/>
<text x="1055.500" y="710" font-size="9" font-weight="700" fill="#d8d8d8">2</text>
<rect x="1068.500" y="701.500" width="9" height="11" rx="1" fill="none" stroke="#dcdcdc" stroke-width="1.100"/><rect x="1071.500" y="704" width="3" height="2.500" fill="#dcdcdc"/>
<text x="1084" y="710" font-size="9" font-weight="700" fill="#d8d8d8">ru</text>
<g fill="#e0e0e0"><rect x="1103" y="701" width="4" height="3.500"/><rect x="1100" y="709" width="4" height="4"/><rect x="1106" y="709" width="4" height="4"/></g><path d="M1105,704v3M1102,709v-2h6v2" stroke="#e0e0e0" fill="none" stroke-width=".9"/>
<path d="M1118,705h2l3,-3v10l-3,-3h-2Z" fill="#dcdcdc"/><path d="M1125,704.500a3,3 0 0 1 0,5M1127,703a6,6 0 0 1 0,8" stroke="#dcdcdc" stroke-width=".9" fill="none"/>
<text x="1134.500" y="710" font-size="9.500" font-weight="700" fill="#d4d4d4" textLength="143">Понедельник, 21 апр 2025, 09:56</text>
</svg>
</body></html>
